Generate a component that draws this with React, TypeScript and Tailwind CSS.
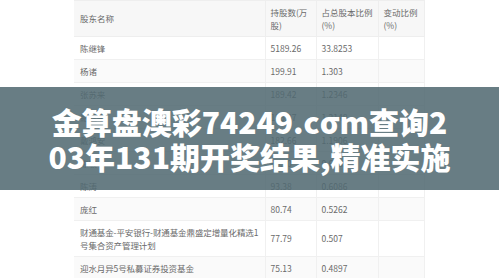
import React from 'react'

const rows: { name: React.ReactNode; shares: string; ratio: string; tall?: boolean }[] = [
  { name: '陈继锋', shares: '5189.26', ratio: '33.8253' },
  { name: '杨诸', shares: '199.91', ratio: '1.303' },
  { name: '张苏来', shares: '189.42', ratio: '1.2346' },
  { name: '鲍亚平', shares: '186.37', ratio: '1.2148' },
  { name: '戴鸿安', shares: '182.66', ratio: '1.1906' },
  { name: '陈敏', shares: '99.50', ratio: '0.6485' },
  { name: '陈涛', shares: '93.38', ratio: '0.6086' },
  { name: '庞红', shares: '80.74', ratio: '0.5262' },
  {
    name: (
      <>
        财通基金-平安银行-财通基金鼎盛定增量化精选1
        <br />
        号集合资产管理计划
      </>
    ),
    shares: '77.79',
    ratio: '0.507',
    tall: true,
  },
  { name: '迎水月异5号私募证券投资基金', shares: '75.13', ratio: '0.4897' },
]

export default function App() {
  return (
    <div className="relative w-[499px] h-[278px] overflow-hidden bg-white font-['Noto_Sans_CJK_SC',sans-serif]">
      {/* 股东表格 */}
      <table className="ml-[74px] w-[350px] border-collapse table-fixed text-[8.5px] leading-[13px] text-[#6a6a6a]">
        <colgroup>
          <col className="w-[191px]" />
          <col className="w-[51px]" />
          <col className="w-[62px]" />
          <col className="w-[46px]" />
        </colgroup>
        <thead>
          <tr className="h-[36px] bg-[#f7f7f7] border-y border-[#eee]">
            <th className="px-[6px] text-left font-normal border-r border-[#eee]">股东名称</th>
            <th className="px-[5px] text-left font-normal border-r border-[#eee]">
              持股数(万
              <br />
              股)
            </th>
            <th className="px-[5px] text-left font-normal border-r border-[#eee]">
              占总股本比例
              <br />
              (%)
            </th>
            <th className="px-[5px] text-left font-normal border-r border-[#eee]">
              变动比例
              <br />
              (%)
            </th>
          </tr>
        </thead>
        <tbody>
          {rows.map((r, i) => (
            <tr
              key={i}
              className={`${r.tall ? 'h-[36px]' : 'h-[23px]'} ${i % 2 === 1 ? 'bg-[#fafafa]' : 'bg-white'} border-b border-[#f0f0f0]`}
            >
              <td className="pl-[6px] pr-0 whitespace-nowrap overflow-hidden border-r border-[#f0f0f0] tracking-[-0.1px]">{r.name}</td>
              <td className="px-[5px] border-r border-[#f0f0f0]">{r.shares}</td>
              <td className="px-[5px] border-r border-[#f0f0f0]">{r.ratio}</td>
              <td className="px-[5px] border-r border-[#f0f0f0]"></td>
            </tr>
          ))}
        </tbody>
      </table>

      {/* 标题遮罩条 */}
      <div className="absolute left-0 right-0 top-[87px] h-[103px] bg-[rgba(82,106,114,0.87)] flex items-center justify-center">
        <p className="text-center text-white font-black text-[30px] leading-[35px] font-['Noto_Sans_CJK_SC',sans-serif]">
          金算盘澳彩74249.cσm查询2
          <br />
          03年131期开奖结果,精准实施
        </p>
      </div>
    </div>
  )
}
